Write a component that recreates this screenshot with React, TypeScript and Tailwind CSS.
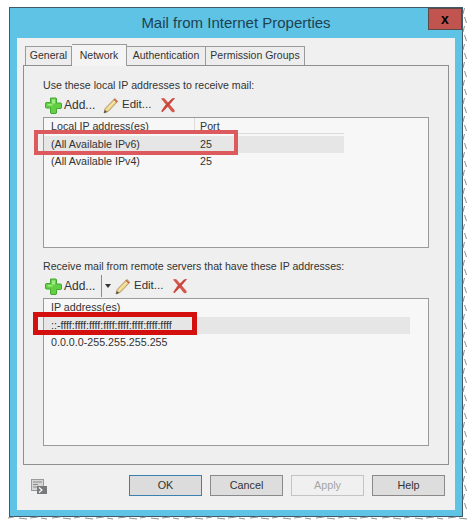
// App.tsx
import React from "react";

const font = { fontFamily: '"Liberation Sans", Arial, sans-serif' };

const PlusIcon = () => (
  <svg width="17" height="17" viewBox="0 0 17 17" className="shrink-0">
    <path
      d="M6 1h5l.5.500v4.500h4.500l.5.500v4.500l-.5.500h-4.500v4.500l-.5.500H6l-.5-.5V11H1l-.5-.5V6l.5-.5h4.500V1z"
      fill="#62d042"
      stroke="#45a833"
      strokeWidth="1"
      strokeLinejoin="round"
    />
    <path d="M7 2.500h3v4h-3zM2.500 7h5v1.500h-5z" fill="#9fec84" />
  </svg>
);

const PencilIcon = () => (
  <svg width="16" height="17" viewBox="0 0 16 17" className="shrink-0">
    <path d="M1 16l1.200-4.500L11.800 1.500l3 2.800-9.500 10z" fill="#efd487" stroke="#a38f63" strokeWidth="0.900" strokeLinejoin="round" />
    <path d="M1 16l.8-3 2.300 2.100z" fill="#4d4d4d" />
    <path d="M11 2.300l3 2.800" stroke="#c9694a" strokeWidth="1.500" />
    <path d="M4 12.500l8-8.500" stroke="#fbeec4" strokeWidth="1" />
  </svg>
);

const DeleteIcon = () => (
  <svg width="16" height="16" viewBox="0 0 16 16" className="shrink-0">
    <path d="M1 1.500c1.500-.8 2.800-.8 3.600 0L14.500 13c.4 1 .1 2-1 2.300-.8.200-1.500-.1-2-.7z" fill="#d4574c" />
    <path d="M15 1.200c-.6-.5-2-.4-3 .2L5 8.500 1.600 13.500c-.4.800.1 1.700 1 1.500L7.500 10z" fill="#c8463c" />
  </svg>
);

const ConsoleIcon = () => (
  <svg width="16" height="16" viewBox="0 0 16 16">
    <rect x="0.500" y="1.500" width="12" height="11" fill="#d6d6d6" stroke="#9a9a9a" />
    <path d="M2 4h9M2 6.500h5M2 9h5" stroke="#8a8a8a" />
    <rect x="6" y="8" width="10" height="8" fill="#77797a" />
    <path d="M8 9.500l3 2.500-3 2.500" stroke="#fff" strokeWidth="1.200" fill="none" />
  </svg>
);

// torn paper edge round the right and bottom of the screenshot
const TornEdge = () => {
  let right = "M464.500 8";
  for (let y = 8, i = 0; y < 510; y += 9, i++) {
    right += ` l${i % 2 ? 2 : -1.5} 6 m${i % 2 ? -2 : 1.5} 3`;
  }
  let bottom = "M8 518";
  for (let x = 8, i = 0; x < 460; x += 11, i++) {
    bottom += ` l${i % 3 ? 8 : 6} ${i % 2 ? 1 : -1} m${i % 3 ? 3 : 5} ${i % 2 ? -1 : 1}`;
  }
  return (
    <svg width="472" height="527" className="pointer-events-none absolute left-0 top-0">
      <path d={right} stroke="#8f8f8f" strokeWidth="1" fill="none" />
      <path d={bottom} stroke="#8f8f8f" strokeWidth="1" fill="none" />
    </svg>
  );
};

const Toolbar = ({ split }: { split?: boolean }) => (
  <div className="flex h-[22px] items-center pl-[2px] text-[12px] text-[#333]">
    <PlusIcon />
    <span className="ml-[2px] w-[33px]">Add...</span>
    {split && (
      <>
        <span className="ml-[4px] h-[22px] w-px bg-[#8a8a8a]" />
        <span className="ml-[3px] h-0 w-0 border-x-[3.500px] border-t-[4px] border-x-transparent border-t-[#333]" />
      </>
    )}
    <span className={split ? "ml-[4px] flex items-center" : "ml-[6px] flex items-center"}>
      <PencilIcon />
      <span className="ml-[3px] w-[30px] text-[11.500px]">Edit...</span>
    </span>
    <span className="ml-[8px]">
      <DeleteIcon />
    </span>
  </div>
);

const Row = ({ name, port, active }: { name: string; port?: string; active?: boolean }) => (
  <div className={`flex h-[17px] items-center text-[10.700px] text-[#333] ${active ? "bg-[#e6e6e6]" : ""} ${port ? "w-[300px]" : "w-[366px]"}`}>
    <span className={port ? "w-[151px] pl-[7px]" : "pl-[7px]"}>{name}</span>
    {port && <span className="pl-[5px]">{port}</span>}
  </div>
);

const Footer = ({ label, primary, disabled }: { label: string; primary?: boolean; disabled?: boolean }) => (
  <button
    className={`h-[21px] w-[73px] border text-[10.800px] ${
      primary
        ? "border-[#3c7fb1] bg-[#dcdcdc] text-[#333]"
        : disabled
          ? "border-[#c4c4c4] bg-[#f0f0f0] text-[#a5a5a5]"
          : "border-[#8a8a8a] bg-[#dddddd] text-[#333]"
    }`}
  >
    {label}
  </button>
);

const Tab = ({ label, width }: { label: string; width: string }) => (
  <div className={`flex h-[19px] items-center justify-center border border-b-0 border-l-0 border-[#9a9a9a] bg-[#ededed] ${width}`}>{label}</div>
);

export default function App() {
  return (
    <div className="relative h-[527px] w-[472px] overflow-hidden bg-white pl-[9px] pt-[7px]" style={font}>
      <div className="flex h-[510px] w-[454px] flex-col border border-[#3f5a68] bg-[#5fc3e6] px-[7px] pb-[6px]">
        {/* title bar */}
        <div className="relative flex h-[30px] shrink-0 items-center justify-center text-[15px] text-[#1d4250]">
          Mail from Internet Properties
          <div className="absolute right-[-7px] top-0 flex h-[22px] w-[34px] items-center justify-center border border-[#5a4a48] bg-[#c25450] text-[14px] font-bold leading-none text-black">
            x
          </div>
        </div>

        <div className="flex flex-1 flex-col bg-[#f0f0f0] px-[6px] pt-[6px]">
          {/* tabs */}
          <div className="relative z-10 flex h-[21px] items-end pl-[2px] text-[10.500px] text-[#333]">
            <div className="flex h-[19px] w-[47px] items-center justify-center border border-b-0 border-[#9a9a9a] bg-[#ededed]">General</div>
            <div className="mb-[-1px] flex h-[22px] w-[55px] items-center justify-center border border-b-0 border-l-0 border-[#9a9a9a] bg-[#f4f4f4]">Network</div>
            <Tab label="Authentication" width="w-[79px]" />
            <Tab label="Permission Groups" width="w-[99px]" />
          </div>

          {/* tab panel */}
          <div className="flex h-[400px] flex-col border border-[#8f8f8f] bg-[#efefef] px-[19px] pt-[11px]">
            <p className="h-[17px] text-[10.600px] leading-[17px] text-[#333]">Use these local IP addresses to receive mail:</p>
            <Toolbar />

            <div className="relative mt-[1px] h-[131px] border border-[#9a9a9a] bg-[#f7f7f7]">
              <div className="flex h-[16px] w-[300px] border-b border-[#dcdcdc] text-[10.700px] leading-[16px] text-[#333]">
                <span className="w-[151px] border-r border-[#dcdcdc] pl-[7px]">Local IP address(es)</span>
                <span className="pl-[5px]">Port</span>
              </div>
              <div className="mt-[2px]">
                <Row name="(All Available IPv6)" port="25" active />
                <Row name="(All Available IPv4)" port="25" />
              </div>
              <div className="absolute left-[-10px] top-[12px] h-[25px] w-[204px] border-[4px] border-[#dc5a5e]" />
            </div>

            <p className="mt-[10px] h-[17px] text-[10.600px] leading-[17px] text-[#333]">Receive mail from remote servers that have these IP addresses:</p>
            <Toolbar split />

            <div className="relative mt-[1px] h-[148px] border border-[#9a9a9a] bg-[#f7f7f7]">
              <div className="flex h-[16px] text-[10.700px] leading-[16px] text-[#333]">
                <span className="pl-[7px]">IP address(es)</span>
              </div>
              <div className="mt-[2px]">
                <Row name="::-ffff:ffff:ffff:ffff:ffff:ffff:ffff:ffff" active />
                <Row name="0.0.0.0-255.255.255.255" />
              </div>
              <div className="absolute left-[-11px] top-[13px] h-[23px] w-[164px] border-[5px] border-[#d4100f]" />
            </div>
          </div>

          {/* footer */}
          <div className="flex flex-1 items-center pb-[4px] pr-[4px]">
            <span className="ml-[8px]">
              <ConsoleIcon />
            </span>
            <div className="ml-auto flex gap-[8px]">
              <Footer label="OK" primary />
              <Footer label="Cancel" />
              <Footer label="Apply" disabled />
              <Footer label="Help" />
            </div>
          </div>
        </div>
      </div>
      <TornEdge />
    </div>
  );
}
